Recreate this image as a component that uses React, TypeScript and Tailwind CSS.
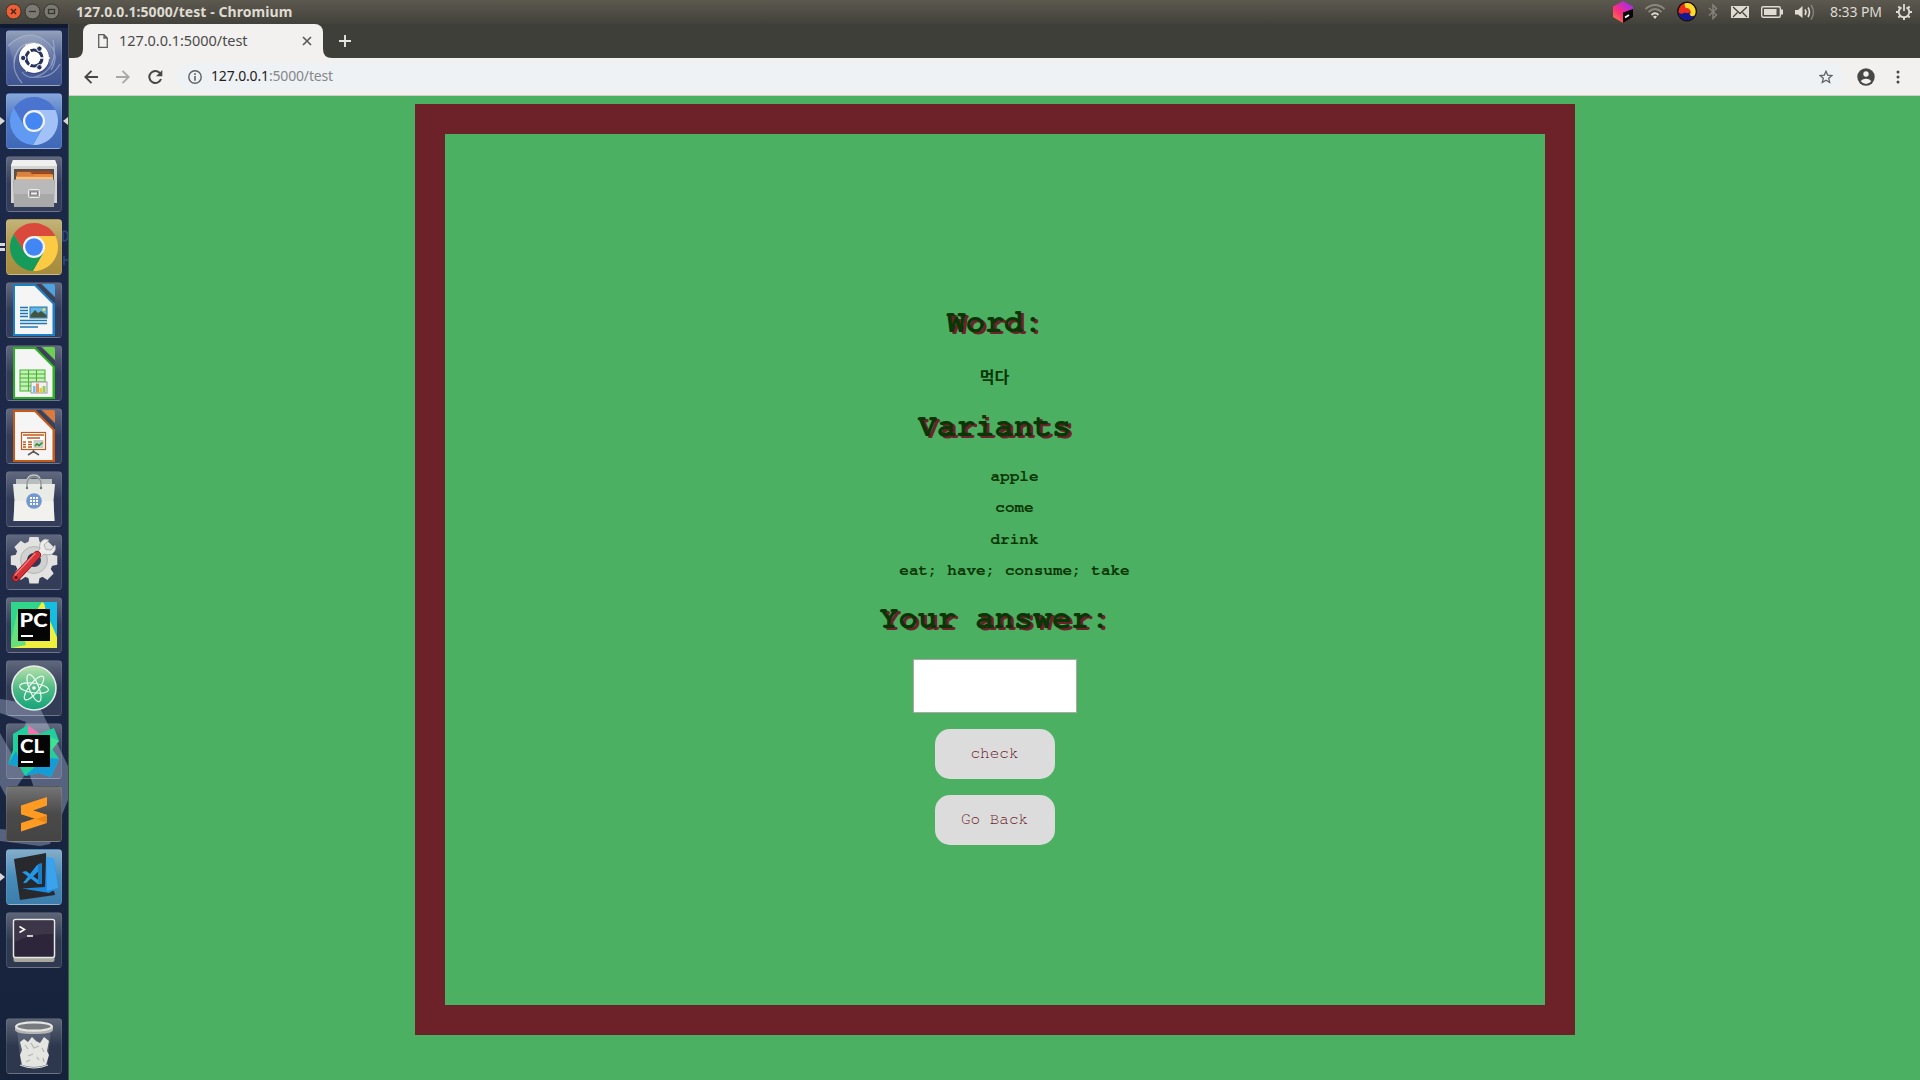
import React from "react";

type Kids = { children?: React.ReactNode };

function Tile({ children, bg, className = "" }: Kids & { bg?: string; className?: string }) {
  return (
    <div
      className={`relative h-14 w-14 shrink-0 overflow-hidden rounded-[4px] border border-white/10 ${bg ?? "bg-linear-to-b from-white/30 via-white/10 to-white/10"} ${className}`}
    >
      <svg viewBox="1 1 54 54" className="block h-full w-full">
        {children}
      </svg>
    </div>
  );
}

function Wheel({ top, right, left, hub }: { top: string; right: string; left: string; hub: string }) {
  return (
    <>
      <path d="M28 17H49.3A24 24 0 0 0 7.8 15L18.5 33.5Z" fill={top} />
      <path d="M28 17H49.3A24 24 0 0 1 26.9 52L37.5 33.5Z" fill={right} />
      <path d="M7.8 15A24 24 0 0 0 26.9 52L37.5 33.5H18.5Z" fill={left} />
      <circle cx="28" cy="28" r="11" fill="#f1f3f8" />
      <circle cx="28" cy="28" r="8.8" fill={hub} />
    </>
  );
}

function Doc({ color, fold, children }: Kids & { color: string; fold: string }) {
  return (
    <>
      <path d="M7 2H29.5L49 21.5V54H7Z" fill={color} />
      <path d="M9 4H28.5L46.5 22V52H9Z" fill="#f5f5f5" />
      <path d="M30 2H35L49 16V21.5Z" fill="#3b4156" />
      <path d="M36 2H47Q49 2 49 4V15Z" fill={fold} />
      {children}
    </>
  );
}

function Launcher() {
  return (
    <aside className="relative flex w-[69px] shrink-0 flex-col items-start gap-[7px] overflow-hidden border-r border-[#4a4d55] bg-linear-to-b from-[#1c2849] via-[#1e2948] to-[#16223a] pt-1.5 pl-1.5">
      <svg className="absolute inset-0" width="68" height="1056" viewBox="0 24 68 1056">
        <path d="M0 24H68V28H0Z" fill="#101a30" />
        <path d="M0 699Q20 701 28 707L40 708 68 766V800L50 844 40 846 0 841V829L34 832 42 812 28 770 8 800 0 785V733L14 758 26 722 0 713Z" fill="#7882a0" opacity=".65" />
        <path d="M0 117L5 121 0 125Z M68 117L63 121 68 125Z" fill="#d8d8d8" />
        <path d="M0 243H5V246H0Z M0 248H5V251H0Z" fill="#d8d8d8" />
        <path d="M0 873L5 877 0 881Z" fill="#d8d8d8" />
        <path d="M63 231V241M63 231Q68 231 68 236T63 241M64 256V265M64 260H68" fill="none" stroke="#314a83" strokeWidth="1.5" />
      </svg>

      <Tile bg="bg-linear-to-b from-[#94a0b9] via-[#50639a] to-[#3f5492]">
        <g fill="none" stroke="#b6c2dc" strokeOpacity=".6" strokeWidth="1.2">
          <path d="M2 16Q20 -2 38 10T45 40M8 37Q8 12 30 13M16 53Q5 40 9 27M47 10Q52 34 38 43T16 42M54 34Q46 49 28 47" />
        </g>
        <path d="M3 15Q20 0 36 10T46 36L42 32Q42 14 28 13T8 34Z" fill="#fff" opacity=".13" />
        <circle cx="28" cy="28.5" r="15.5" fill="#1f2c58" opacity=".35" />
        <circle cx="28" cy="28" r="15" fill="#fff" />
        <circle cx="28" cy="28" r="8" fill="none" stroke="#27335d" strokeWidth="3.2" />
        <path d="M28 28L44 28M28 28L20 14.5M28 28L20 41.5" stroke="#fff" strokeWidth="1.5" />
        <circle cx="28" cy="28" r="6.3" fill="#fff" />
        <g fill="#27335d" stroke="#fff" strokeWidth="1">
          <circle cx="17.2" cy="28" r="2.7" />
          <circle cx="33.4" cy="18.7" r="2.7" />
          <circle cx="33.4" cy="37.3" r="2.7" />
        </g>
      </Tile>

      <Tile bg="bg-linear-to-b from-[#86a7da] via-[#4b74c0] to-[#3f68b6]">
        <Wheel top="#4a74cf" right="#a2c1f6" left="#619af3" hub="#4587f2" />
      </Tile>

      <Tile>
        <path d="M7 4H49L51 9V47H5V9Z" fill="#d4d4d2" />
        <path d="M7 4H49L51 10H5Z" fill="#f0f0ee" />
        <path d="M8 13H48V26H8Z" fill="#59504b" />
        <path d="M11 15H45V24H11Z" fill="#9a4a22" />
        <path d="M11 16H24L26 18H46V24H10Z" fill="#d9823f" />
        <path d="M10 20H27L29 18.5H47V24H10Z" fill="#ef8b3a" />
        <path d="M10 21H47V24H10Z" fill="#f6c28a" />
        <path d="M7 23.5H49L48 51H8Z" fill="#a9a9a9" />
        <path d="M8 24H48V38H8Z" fill="#c4c4c4" opacity=".6" />
        <rect x="22.500" y="33.500" width="11" height="8" rx="1" fill="#aaa" stroke="#ededed" />
        <rect x="24.500" y="36" width="7" height="3" fill="#f5f5f5" stroke="#666" strokeWidth=".8" />
      </Tile>

      <Tile bg="bg-linear-to-b from-[#c3b479] via-[#ae964a] to-[#a58c3e]">
        <Wheel top="#d94a3d" right="#fccb43" left="#169b5a" hub="#4285f4" />
      </Tile>

      <Tile>
        <Doc color="#1b7fc4" fold="#4ea3dc">
          <path d="M14 25.500H22M14 28.500H22M14 31.500H22M14 34.500H22M14 38.500H41M14 41.500H41M14 45H32" stroke="#1f78b6" strokeWidth="1.4" />
          <rect x="24" y="25" width="17" height="11" fill="#62b5e8" stroke="#2376ad" />
          <path d="M24.500 33L29 28 32 31 35 29 40.500 33V35.500H24.500Z" fill="#41543f" />
          <circle cx="38" cy="27.500" r="1.500" fill="#f6e13a" />
        </Doc>
      </Tile>

      <Tile>
        <Doc color="#2bb21f" fold="#6cd152">
          <rect x="14" y="25" width="25" height="21" fill="#c8efb9" stroke="#3fb52b" />
          <path d="M14 29H39M14 33H39M14 37H39M14 41H39M22.500 25V46M30.500 25V46" stroke="#3fb52b" strokeWidth="1.1" />
          <rect x="25" y="37" width="16" height="11" fill="#f1f1f1" stroke="#999" />
          <path d="M27 47.500V41H29.500V47.500Z" fill="#6cc0e8" />
          <path d="M30 47.500V38.500H33V47.500Z" fill="#e9906b" />
          <path d="M33.500 47.500V43H36V47.500Z" fill="#f0c832" />
          <path d="M36.500 47.500V41H39.500V47.500Z" fill="#95cf5c" />
        </Doc>
      </Tile>

      <Tile>
        <Doc color="#c75a17" fold="#d97b3c">
          <rect x="15.500" y="24.500" width="24" height="17" fill="#fff" stroke="#c0591d" strokeWidth="1.2" />
          <path d="M17 27H38M21 30H34M22 34H26M22 36.500H26M22 39H26M17 34H20M17 36.500H20M17 39H20" stroke="#c0591d" strokeWidth="1.500" />
          <rect x="27.500" y="32" width="10" height="8" fill="#c9c9c9" />
          <path d="M29 38L31 36 33 37.500 36.500 34.500" fill="none" stroke="#1a941a" strokeWidth="1.400" />
          <path d="M27.500 42V44M22 47L27.500 43.500 33 47" fill="none" stroke="#5c5c5c" strokeWidth="1.500" />
        </Doc>
      </Tile>

      <Tile>
        <path d="M10 8H46V15H10Z" fill="#babdbd" />
        <path d="M21 15V11Q21 4 28 4T34 11V15" fill="none" stroke="#c6c9ca" strokeWidth="1.300" />
        <path d="M7 13H49L47.500 30 48.500 50H7.500L8.500 30Z" fill="#e9ebe7" />
        <path d="M8.500 30L47.500 30 48.500 50H7.500Z" fill="#f3f4f0" opacity=".7" />
        <path d="M21 17V13Q21 6 28 6T35 13V17" fill="none" stroke="#8e9293" strokeWidth="1.300" />
        <circle cx="21" cy="17" r="1.200" fill="#6f7272" />
        <circle cx="35" cy="17" r="1.200" fill="#6f7272" />
        <circle cx="28" cy="30" r="7.800" fill="#7298cf" />
        <path d="M24 27H32M24 30H32M24 33H32" stroke="#fff" strokeWidth="2" strokeDasharray="2 1" />
      </Tile>

      <Tile>
        <g fill="#e2e2e1">
          <circle cx="28" cy="26" r="19" />
          {[0, 45, 90, 135].map((a) => (
            <path key={a} d="M23.500 3H32.500L34 10V42L32.500 49.500H23.500L22 42V10Z" transform={`rotate(${a} 28 26.300)`} />
          ))}
        </g>
        <circle cx="28" cy="26" r="13.500" fill="#d0d1d1" stroke="#b4b5b5" />
        <circle cx="28" cy="26" r="7" fill="#303955" />
        <path d="M30 19L34 15Q32 8 39 5L43 6 38 11 40 15.500 45 16 49 11Q51 16 46 20 42 22 38 20L34 24Z" fill="#ececeb" stroke="#a1a3a3" strokeWidth=".8" />
        <path d="M10 43.500L31 21" stroke="#8e1017" strokeWidth="8" strokeLinecap="round" />
        <path d="M10 43.500L31 21" stroke="#d53338" strokeWidth="6.500" strokeLinecap="round" />
        <path d="M9 41L29 19.500" stroke="#ee7b7c" strokeWidth="1.500" strokeLinecap="round" />
        <circle cx="10" cy="43.500" r="1.600" fill="#52151b" />
      </Tile>

      <Tile>
        <path d="M5 5H51V51H5Z" fill="#2bc7a0" />
        <path d="M5 5H38L20 30 5 42Z" fill="#30d68a" />
        <path d="M5 51L20 30 36 5 40 8 51 40V51Z" fill="#f1ef3d" />
        <path d="M38 5H51V40L40 15Z" fill="#14bee0" />
        <path d="M5 44L12 12 20 48 5 51Z" fill="#67e07b" />
        <rect x="12" y="12" width="32" height="32" fill="#050505" />
        <text x="13.500" y="30" fontFamily="Lato, sans-serif" fontWeight="900" fontSize="18.500" textLength="28" lengthAdjust="spacingAndGlyphs" fill="#fff">PC</text>
        <path d="M15 38H27V40H15Z" fill="#fff" />
      </Tile>

      <Tile>
        <defs>
          <linearGradient id="atom" x2="0" y2="1">
            <stop offset="0" stopColor="#b9e2ac" />
            <stop offset=".5" stopColor="#52bb86" />
            <stop offset="1" stopColor="#11a47b" />
          </linearGradient>
        </defs>
        <circle cx="28" cy="28" r="22" fill="url(#atom)" stroke="#e8ecea" strokeWidth="1.600" />
        <g fill="none" stroke="#edfff2" strokeWidth="1.200">
          <ellipse cx="28" cy="28" rx="14.500" ry="4.800" transform="rotate(8 28 28)" />
          <ellipse cx="28" cy="28" rx="14.500" ry="4.800" transform="rotate(68 28 28)" />
          <ellipse cx="28" cy="28" rx="14.500" ry="4.800" transform="rotate(128 28 28)" />
        </g>
        <circle cx="28" cy="28" r="1.800" fill="#fff" />
      </Tile>

      <Tile>
        <path d="M7 11L22 2 33 11 48 5 53 18 45 24 53 36 45 54 33 50 19 53 14 44 2 41 7 27Z" fill="#21cf9c" />
        <path d="M22 2L34 11H22Z" fill="#f473ae" />
        <path d="M2 41L10 28 16 44Z" fill="#119ed4" />
        <path d="M19 53L30 43 44 35 53 36 45 54 33 50Z" fill="#159bd7" />
        <path d="M45 14L53 18 45 28Z" fill="#3ee292" />
        <rect x="12" y="12" width="32" height="32" fill="#050505" />
        <text x="14" y="29.500" fontFamily="Lato, sans-serif" fontWeight="900" fontSize="18" textLength="24" lengthAdjust="spacingAndGlyphs" fill="#fff">CL</text>
        <path d="M15 38H27V40H15Z" fill="#fff" />
      </Tile>

      <Tile bg="bg-linear-to-b from-[#747474] via-[#4a4a4a] to-[#444444]">
        <path d="M41 11L15 19.500V28L29 32.500 15 37V45.500L41 37V29L27 24.500 41 19.500Z" fill="#ff9b23" />
        <path d="M15 28L41 37V29L27 24.500Z" fill="#e98516" />
        <path d="M15 19.500V28L31 33 41 29 27 24.500Z" fill="#ff9b23" />
      </Tile>

      <Tile bg="bg-linear-to-b from-[#84adc9] via-[#478cba] to-[#3c7dac]">
        <path d="M8 10L40 4 41 40 48 42 49 46 14 51Z" fill="#27292c" />
        <path d="M40 8L48 10 52 39 43 44 16 39.500 39 38Z" fill="#1c8ade" />
        <path d="M40 8L48 10 52 39 41 42Z" fill="#3ba3ed" />
        <path d="M16 23L20 22 35 33 36 35 32 35Z M17 34L31 16 36 15V19L20 34Z" fill="#2498e8" />
        <path d="M32 15L36 14V35L32 34Z" fill="#1a7dc8" />
      </Tile>

      <Tile>
        <rect x="7.500" y="8" width="41" height="42" rx="2" fill="#a7a7a0" />
        <rect x="7.500" y="7.500" width="41" height="38" rx="2" fill="#2d2539" stroke="#e7e7e3" strokeWidth="1.500" />
        <path d="M9 9H47V22Q26 21 9 30Z" fill="#fff" opacity=".08" />
        <path d="M13.500 14.500L18.500 17.500 13.500 20.500M21 24H27" fill="none" stroke="#fff" strokeWidth="1.600" />
      </Tile>

      <Tile className="mt-[43px]">
        <path d="M11 12L15 48Q28 53 41 48L45 12Z" fill="#7a8192" opacity=".45" />
        <path d="M14 24L18 21 22 24 26 19 30 23 34 25 38 19 43 23 41 33 43 37 40 47Q28 51 16 47L14 37 16 32Z" fill="#e4e4e1" />
        <path d="M19 27L22 31M25 25L28 30 33 28M36 30L38 34M22 38L27 36M31 39L33 42M20 44L24 42M37 40L38 44" fill="none" stroke="#b4b5b1" strokeWidth="1.200" />
        <path d="M14 47Q28 53 42 47" fill="none" stroke="#dfe0df" />
        <path d="M9 8V12Q10 16 28 16T47 12V8Z" fill="#b4b5b3" />
        <ellipse cx="28" cy="8.500" rx="17.800" ry="4.200" fill="#777a7e" stroke="#e6e7e4" strokeWidth="2.200" />
      </Tile>
    </aside>
  );
}

function SystemBar() {
  return (
    <header className="flex h-6 shrink-0 items-center bg-linear-to-b from-[#5c594f] to-[#42413b] pl-1.5 pr-2 font-['Noto_Sans',sans-serif] text-[#dfdbd2]">
      <svg width="54" height="24" viewBox="0 0 54 24">
        <circle cx="7.500" cy="11.500" r="7.500" fill="#ee5f33" stroke="#37352f" />
        <path d="M5 9L10 14M10 9L5 14" stroke="#45261c" strokeWidth="1.500" />
        <circle cx="26.500" cy="11.500" r="7.500" fill="#7b7972" stroke="#37352f" />
        <path d="M23 11.500H30" stroke="#37352f" strokeWidth="1.300" />
        <circle cx="45.500" cy="11.500" r="7.500" fill="#7b7972" stroke="#37352f" />
        <rect x="42.500" y="9.500" width="6" height="4" fill="none" stroke="#37352f" strokeWidth="1.300" />
      </svg>
      <h1 className="ml-4 w-[218px] text-[14px] leading-6 font-bold tracking-[0.07px] whitespace-nowrap">127.0.0.1:5000/test - Chromium</h1>
      <svg className="ml-auto" width="20" height="24" viewBox="0 0 20 24">
        <defs>
          <linearGradient id="cube" x1="0" y1="1" x2=".8" y2="0">
            <stop offset="0" stopColor="#fe8a2c" />
            <stop offset=".45" stopColor="#fb2f7b" />
            <stop offset="1" stopColor="#a02bf6" />
          </linearGradient>
        </defs>
        <path d="M10 1L20 6.500V17L10 23 0 17V6.500Z" fill="url(#cube)" />
        <path d="M20 9L10 12.500V23L20 17Z" fill="#060606" />
        <path d="M12 17.500L16 15" stroke="#fff" strokeWidth="1.800" />
      </svg>
      <svg className="ml-3" width="20" height="24" viewBox="0 0 20 24" fill="none" strokeWidth="1.800">
        <path d="M0.500 9Q10 1 19.500 9" stroke="#8b887f" />
        <path d="M3.500 12Q10 6 16.500 12" stroke="#8b887f" />
        <path d="M6.500 15Q10 11.500 13.500 15" stroke="#dfdbd2" />
        <path d="M8 16.500Q10 15 12 16.500L10 19Z" fill="#dfdbd2" />
      </svg>
      <svg className="ml-3" width="20" height="24" viewBox="0 0 20 24">
        <circle cx="10" cy="11.500" r="10" fill="#111" />
        <circle cx="10" cy="11.500" r="8.500" fill="#ed2e1b" />
        <path d="M8 3.250A8.500 8.500 0 0 1 17.500 15.500Q15 17.500 12.500 15 15 12 12.500 9.500 9.500 9.500 8.500 7.500 7 5 8 3.250Z" fill="#fbdd27" />
        <path d="M1.600 12.500Q5 15 7.500 12.500 10.500 13.500 12.500 11.500 12 15 14 16 16 16.500 17.500 15.500A8.500 8.500 0 0 1 1.600 12.500Z" fill="#101a96" />
        <circle cx="10" cy="10.500" r="2.600" fill="#ed2e1b" />
      </svg>
      <svg className="ml-[11px]" width="10" height="24" viewBox="0 0 10 24">
        <path d="M1 8L8.500 15 5 18.500V5L8.500 8.500 1 15.500" fill="none" stroke="#85827a" strokeWidth="1.500" />
      </svg>
      <svg className="ml-[13px]" width="18" height="24" viewBox="0 0 18 24">
        <path d="M0 6H18V18H0Z" fill="#dfdbd2" />
        <path d="M2 7L9 13.500 16 7M2 17L6.500 12.500M16 17L11.500 12.500" fill="none" stroke="#45433d" strokeWidth="1.300" />
      </svg>
      <svg className="ml-3" width="22" height="24" viewBox="0 0 22 24">
        <rect x=".7" y="6.700" width="18.600" height="10.600" rx="1.500" fill="none" stroke="#dfdbd2" strokeWidth="1.400" />
        <path d="M3 9H15.500V15H3ZM20 9.500H22V14.500H20Z" fill="#dfdbd2" />
      </svg>
      <svg className="ml-3" width="20" height="24" viewBox="0 0 20 24">
        <path d="M0 10H3L7.500 6V18L3 14.500H0Z" fill="#dfdbd2" />
        <path d="M10 9.500Q12 12 10 15M13 7.500Q16 12 13 17" fill="none" stroke="#dfdbd2" strokeWidth="1.600" />
        <path d="M16 5Q21 12 16 19.500" fill="none" stroke="#85827a" strokeWidth="1.500" />
      </svg>
      <span className="ml-[15px] w-[53px] text-[14px] leading-6 tracking-[-0.1px] whitespace-nowrap">8:33 PM</span>
      <svg className="ml-[13px]" width="16" height="24" viewBox="0 0 16 24" fill="none" stroke="#dfdbd2">
        <path d="M5.500 7.300A5.300 5.300 0 1 0 10.500 7.300" strokeWidth="1.900" />
        <path d="M8 4V11" strokeWidth="1.800" />
        <path d="M0 12H3M13 12H16M2.300 6.500L4.300 8.300M13.700 6.500L11.700 8.300M2.300 17.500L4.300 15.800M13.700 17.500L11.700 15.800M8 17V20" strokeWidth="2" />
      </svg>
    </header>
  );
}

function BrowserChrome() {
  return (
    <div className="shrink-0 font-['Noto_Sans',sans-serif]">
      <div className="flex h-[34px] items-end bg-[#3f3f39]">
        <svg width="14" height="34" viewBox="0 0 14 34">
          <path d="M14 34H5Q14 34 14 25Z" fill="#f2f1f0" />
        </svg>
        <div className="flex h-[34px] w-[240px] items-center rounded-t-lg bg-[#f2f1f0] pl-[15px]">
          <svg width="10" height="14" viewBox="0 0 10 14" fill="none" stroke="#5d5d5b" strokeWidth="1.300">
            <path d="M.7 .7H6L9.300 4V13.300H.7ZM6 .7V4H9.300" />
          </svg>
          <span className="ml-[11px] w-[183px] pb-0.5 text-[14.5px] leading-5 tracking-[-0.05px] whitespace-nowrap text-[#4b4b49]">127.0.0.1:5000/test</span>
          <svg width="10" height="10" viewBox="0 0 10 10" stroke="#5a5a58" strokeWidth="1.700">
            <path d="M1 1L9 9M9 1L1 9" />
          </svg>
        </div>
        <svg width="40" height="34" viewBox="0 0 40 34">
          <path d="M0 25Q0 34 9 34H0Z" fill="#f2f1f0" />
          <path d="M16 17H28M22 11V23" stroke="#e6e5e0" strokeWidth="1.900" />
        </svg>
      </div>
      <div className="flex h-[38px] items-center border-b border-[#cfcecc] bg-[#f2f1f0] pl-[15px] pr-5">
        <svg width="14" height="14" viewBox="0 0 14 14" fill="none" stroke="#474745" strokeWidth="1.900">
          <path d="M14 7H1.500M7.500 .8L1.300 7 7.500 13.200" />
        </svg>
        <svg className="ml-[18px]" width="14" height="14" viewBox="0 0 14 14" fill="none" stroke="#a9a8a6" strokeWidth="1.900">
          <path d="M0 7H12.500M6.500 .8L12.700 7 6.500 13.200" />
        </svg>
        <svg className="ml-[18px]" width="15" height="14" viewBox="0 0 15 14">
          <path d="M12 3.200A6 6 0 1 0 13 9" fill="none" stroke="#474745" strokeWidth="2" />
          <path d="M14.300 0V6.200H8Z" fill="#474745" />
        </svg>
        <div className="ml-3.5 flex h-7 flex-1 items-center rounded-full bg-[#eff2f4] pl-[11px] pr-[11px]">
          <svg width="14" height="14" viewBox="0 0 14 14">
            <circle cx="7" cy="7" r="6.200" fill="none" stroke="#5f6165" strokeWidth="1.400" />
            <path d="M6.200 6H7.800V10.700H6.200ZM6.200 3.300H7.800V4.900H6.200Z" fill="#5f6165" />
          </svg>
          <span className="ml-[9px] flex-1 pb-0.5 text-[14px] leading-5 tracking-[-0.16px] whitespace-nowrap text-[#85878a]">
            <span className="text-[#1f2023]">127.0.0.1</span>:5000/test
          </span>
          <svg width="14" height="14" viewBox="0 0 14 14">
            <path d="M7 1.300L8.700 5.100 12.900 5.500 9.700 8.300 10.700 12.500 7 10.300 3.300 12.500 4.300 8.300 1.100 5.500 5.300 5.100Z" fill="none" stroke="#5f6165" strokeWidth="1.300" />
          </svg>
        </div>
        <svg className="ml-[13px]" width="18" height="18" viewBox="0 0 18 18">
          <circle cx="9" cy="9" r="8.700" fill="#474745" />
          <circle cx="9" cy="6" r="2.700" fill="#f2f1f0" />
          <path d="M3.800 13.300Q5 10.700 9 10.700T14.200 13.300Q12 16 9 16T3.800 13.300Z" fill="#f2f1f0" />
        </svg>
        <svg className="ml-[21px]" width="4" height="14" viewBox="0 0 4 14" fill="#474745">
          <circle cx="2" cy="2" r="1.500" />
          <circle cx="2" cy="7" r="1.500" />
          <circle cx="2" cy="12" r="1.500" />
        </svg>
      </div>
    </div>
  );
}

function Heading({ children }: Kids) {
  return (
    <h1 className="text-[32px] leading-9 font-bold [text-shadow:3px_2px_#6d2129]">{children}</h1>
  );
}

function Quiz() {
  const variants = ["apple", "come", "drink", "eat; have; consume; take"];
  return (
    <main className="flex-1 bg-[#4bb062] pt-2">
      <section className="mx-auto flex h-[931px] w-[1160px] flex-col items-center border-[30px] border-[#6d2129] pt-[170px] font-['Courier_10_Pitch','Nimbus_Mono_PS','FreeMono','Liberation_Mono','Noto_Sans_CJK_KR',monospace] text-[#0a3505]">
        <Heading>Word:</Heading>
        <p className="mt-[26px] h-6 text-[16px] leading-6 font-bold">먹다</p>
        <div className="mt-[18px]">
          <Heading>Variants</Heading>
        </div>
        <ul className="mt-[23px] flex flex-col pl-10 text-center text-[16px] font-bold">
          {variants.map((v) => (
            <li key={v} className="h-[31.25px] leading-[18px]">{v}</li>
          ))}
        </ul>
        <div className="mt-2">
          <Heading>Your answer:</Heading>
        </div>
        <input className="mt-[23px] h-[54px] w-[164px] border border-[#a9a9a9] bg-white px-2 outline-none" />
        <button className="mt-4 h-[50px] w-[120px] rounded-[15px] bg-[#dcdcdc] pb-0.5 text-[16px] text-[#6d2129]">check</button>
        <button className="mt-4 h-[50px] w-[120px] rounded-[15px] bg-[#dcdcdc] pb-0.5 text-[16px] text-[#6d2129]">Go Back</button>
      </section>
    </main>
  );
}

export default function App() {
  return (
    <div className="flex h-[1080px] w-[1920px] flex-col overflow-hidden">
      <SystemBar />
      <div className="flex min-h-0 flex-1">
        <Launcher />
        <div className="flex flex-1 flex-col">
          <BrowserChrome />
          <Quiz />
        </div>
      </div>
    </div>
  );
}
